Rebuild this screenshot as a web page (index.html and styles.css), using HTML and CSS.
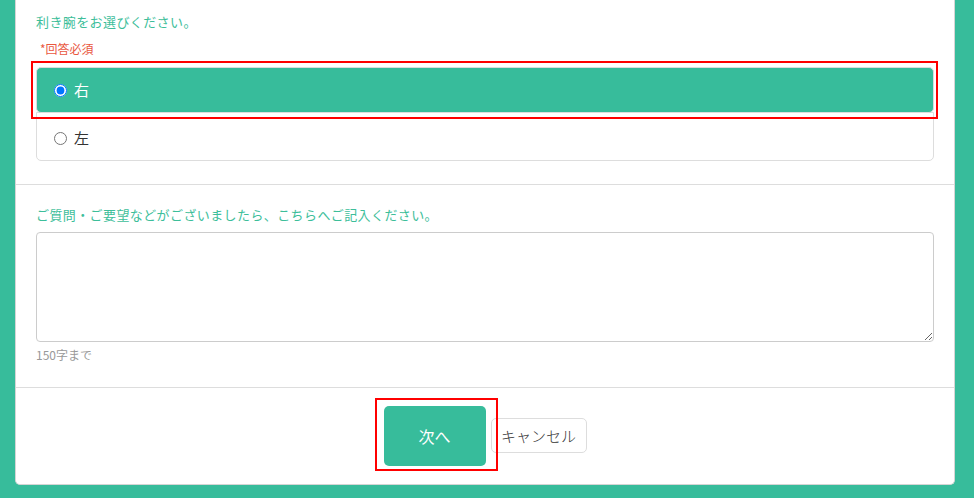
FILE: index.html
```html
<!DOCTYPE html>
<html lang="ja">
<head>
    <meta charset="UTF-8">
    <meta name="viewport" content="width=device-width, initial-scale=1.0">
    <title>アンケート</title>
    <link rel="stylesheet" href="styles.css">
</head>
<body>
    <div class="card">
        <!-- 利き腕 -->
        <div class="section section-hand">
            <p class="question">利き腕をお選びください。</p>
            <p class="required">*回答必須</p>
            <div class="options">
                <label class="option selected">
                    <input type="radio" name="hand" value="right" checked>
                    <span>右</span>
                </label>
                <label class="option">
                    <input type="radio" name="hand" value="left">
                    <span>左</span>
                </label>
            </div>
        </div>

        <!-- ご質問・ご要望 -->
        <div class="section section-comment">
            <p class="question">ご質問・ご要望などがございましたら、こちらへご記入ください。</p>
            <textarea class="comment" maxlength="150"></textarea>
            <p class="hint">150字まで</p>
        </div>

        <!-- ボタン -->
        <div class="section section-buttons">
            <button class="btn btn-next">次へ</button>
            <button class="btn btn-cancel">キャンセル</button>
        </div>
    </div>
</body>
</html>
```

FILE: styles.css
```css
/* 全体 */
body {
    margin: 0;
    background-color: #37BC9B;
    font-family: "Noto Sans CJK JP", "Liberation Sans", sans-serif;
    color: #333;
}
p {
    margin: 0;
}
.card {
    width: 938px;
    margin-left: 15px;
    background-color: #FFF;
    border: 1px solid #D5D5D5;
    border-top: none;
    border-radius: 0 0 5px 5px;
}
.section {
    padding: 12px 20px 23px 20px;
    border-bottom: 1px solid #DDD;
}
.section:last-child {
    border-bottom: none;
}
.question {
    font-size: 13px;
    line-height: 20px;
    letter-spacing: 0.4px;
    color: #3DBE9A;
}

/* 利き腕 */
.required {
    margin: 8px 0 0 4px;
    font-size: 12px;
    line-height: 17px;
    color: #E9573F;
}
.options {
    margin-top: 10px;
}
.option {
    display: flex;
    align-items: center;
    gap: 2px;
    padding: 12px 16px;
    font-size: 15px;
    line-height: 20px;
    border: 1px solid #DDD;
    cursor: pointer;
}
.option + .option {
    margin-top: -1px;
    padding-top: 15px;
    padding-bottom: 12px;
    border-radius: 0 0 5px 5px;
}
.option input {
    margin: 0 5px 0 1px;
}
.option.selected {
    position: relative;
    background-color: #37BC9B;
    color: #FFF;
    border-radius: 5px;
}
/* 赤枠（注記） */
.option.selected::after,
.btn-next::after {
    content: "";
    position: absolute;
    border: 2px solid #F00;
    pointer-events: none;
}
.option.selected::after {
    top: -7px;
    left: -6px;
    right: -5px;
    bottom: -7px;
}

/* ご質問 */
.section-comment {
    padding-top: 20px;
    padding-bottom: 24px;
}
.comment {
    display: block;
    box-sizing: border-box;
    width: 100%;
    height: 110px;
    margin-top: 7px;
    border: 1px solid #CCC;
    border-radius: 4px;
    font-family: inherit;
    font-size: 14px;
}
.hint {
    margin-top: 4px;
    font-size: 12px;
    line-height: 17px;
    color: #999;
}

/* ボタン */
.section-buttons {
    display: flex;
    justify-content: center;
    align-items: center;
    gap: 5px;
    padding: 18px 20px 18px 20px;
}
.btn {
    font-family: inherit;
    border-radius: 5px;
    cursor: pointer;
}
.btn-next {
    position: relative;
    width: 102px;
    height: 60px;
    background-color: #37BC9B;
    color: #FFF;
    font-size: 16px;
    border: none;
}
.btn-next::after {
    top: -8px;
    left: -9px;
    right: -12px;
    bottom: -5px;
}
.btn-cancel {
    width: 96px;
    height: 35px;
    margin-top: -1px;
    background-color: #FFF;
    color: #333;
    font-size: 15px;
    font-weight: 300;
    border: 1px solid #DDD;
}
```
